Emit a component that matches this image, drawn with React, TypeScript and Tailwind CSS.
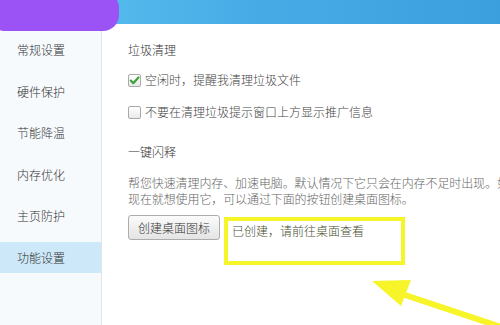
import React from 'react';

const navItems = ['常规设置', '硬件保护', '节能降温', '内存优化', '主页防护', '功能设置'];

const Checkbox: React.FC<{ checked?: boolean }> = ({ checked }) => (
    <span className="w-[13px] h-[13px] border border-[#a9a9a9] rounded-[2px] bg-gradient-to-b from-[#ffffff] to-[#e9e9e9] flex items-center justify-center shrink-0">
        {checked && (
            <svg width="11" height="11" viewBox="0 0 11 11">
                <path d="M1.8 5.6 L4.3 8.2 L9.4 2.4" fill="none" stroke="#3aa33a" strokeWidth="2.2" strokeLinecap="round" strokeLinejoin="round" />
            </svg>
        )}
    </span>
);

const App: React.FC = () => {
    return (
        <div
            className="relative w-[500px] h-[325px] overflow-hidden bg-white flex flex-col text-[12px] text-[#333] font-light"
            style={{ fontFamily: '"Microsoft YaHei", "Noto Sans CJK SC", sans-serif' }}
        >
            <header className="h-[24px] shrink-0 bg-gradient-to-r from-[#5cc4f0] via-[#47ace6] to-[#3b9fde]" />
            {/* purple blob covering the title */}
            <div className="absolute left-[-6px] top-[-8px] w-[125px] h-[39px] bg-[#9b53f6] rounded-r-[16px] rounded-bl-[10px]" />

            <div className="flex flex-1 min-h-0">
                <aside className="w-[102px] shrink-0 bg-[#f7fafd] border-r border-[#e2e6ea] pt-[10.5px] flex flex-col gap-[10.6px]">
                    {navItems.map((item) => (
                        <div
                            key={item}
                            className={`h-[31px] flex items-center pl-[17px] text-[12px] text-[#333] ${item === '功能设置' ? 'bg-[#cde8f8]' : ''}`}
                        >
                            {item}
                        </div>
                    ))}
                </aside>

                <main className="flex-1 min-w-0 pl-[26px] pt-[17px] leading-[18px] overflow-hidden">
                    <div className="text-[#333]">垃圾清理</div>
                    <label className="mt-[12px] flex items-center gap-[4px] text-[#444] h-[18px]">
                        <Checkbox checked />
                        <span>空闲时，提醒我清理垃圾文件</span>
                    </label>
                    <label className="mt-[14px] flex items-center gap-[4px] text-[#444] h-[18px]">
                        <Checkbox />
                        <span>不要在清理垃圾提示窗口上方显示推广信息</span>
                    </label>

                    <div className="mt-[22px] text-[#333]">一键闪释</div>
                    <div className="mt-[14px] leading-[16px] text-[#666] tracking-[-0.1px] whitespace-nowrap">
                        <div>帮您快速清理内存、加速电脑。默认情况下它只会在内存不足时出现。如果</div>
                        <div>现在就想使用它，可以通过下面的按钮创建桌面图标。</div>
                    </div>

                    <div className="mt-[8px] flex items-start gap-[4px]">
                        <button className="h-[25px] px-[9px] border border-[#adadad] rounded-[3px] bg-gradient-to-b from-[#fbfbfb] to-[#e4e4e4] text-[12px] text-[#333] leading-none">
                            创建桌面图标
                        </button>
                        <div className="mt-[2px] w-[181px] h-[48px] border-[4px] border-[#f6f52a] px-[4px] pt-[2px] text-[#48502f] leading-[16px]">
                            已创建，请前往桌面查看
                        </div>
                    </div>
                </main>
            </div>

            {/* yellow annotation arrow */}
            <svg className="absolute left-0 top-0 pointer-events-none" width="500" height="325" viewBox="0 0 500 325">
                <line x1="396" y1="292" x2="510" y2="330" stroke="#f7f42a" strokeWidth="6" strokeLinecap="round" />
                <polygon points="372,281 411,280 401,306" fill="#f7f42a" />
            </svg>
        </div>
    );
};

export default App;
